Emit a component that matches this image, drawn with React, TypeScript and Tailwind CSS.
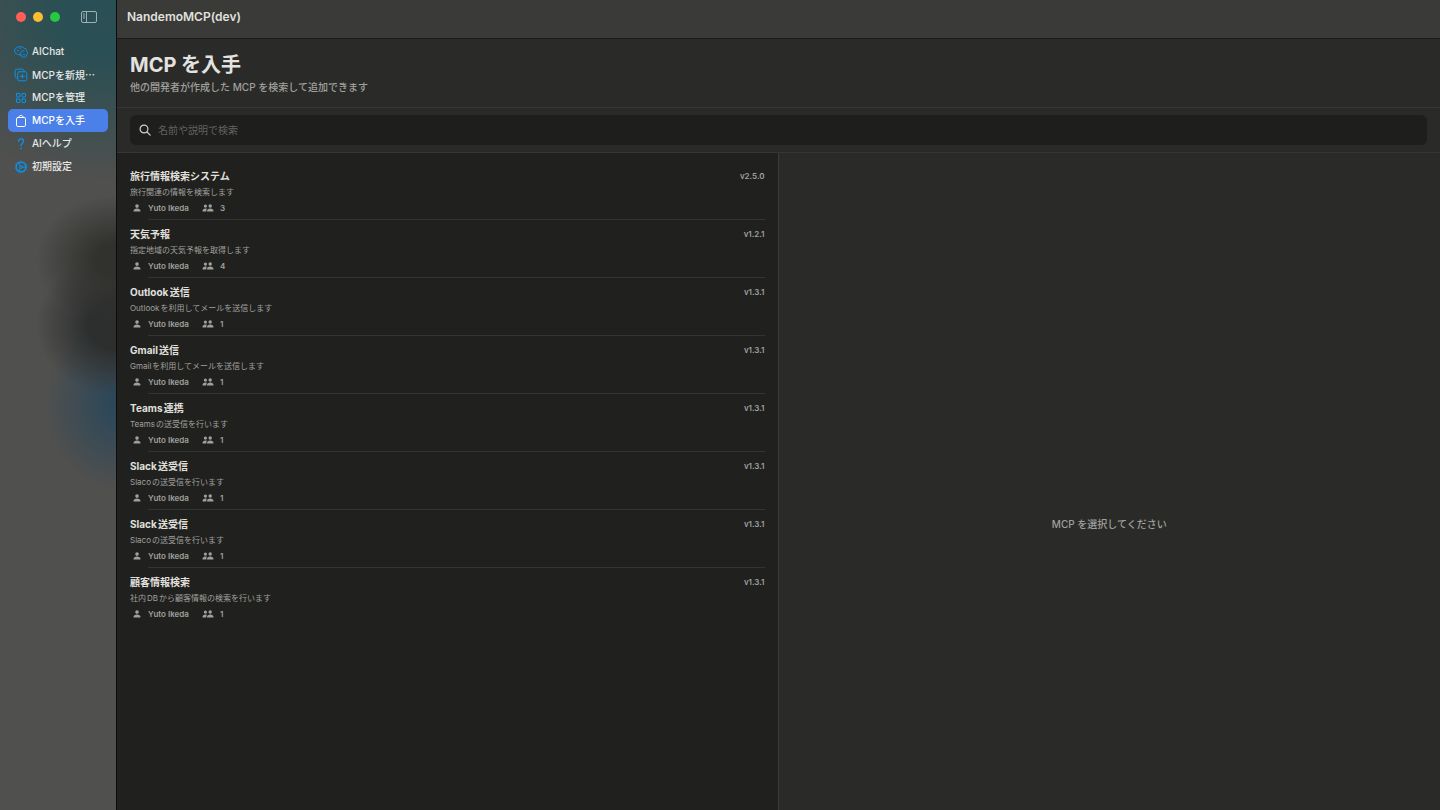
import { useState } from 'react';
import type { ReactNode } from 'react';

type McpItem = {
  id: number;
  name: string;
  description: string;
  author: string;
  users: number;
  version: string;
};

const mcpItems: McpItem[] = [
  { id: 1, name: '旅行情報検索システム', description: '旅行関連の情報を検索します', author: 'Yuto Ikeda', users: 3, version: 'v2.5.0' },
  { id: 2, name: '天気予報', description: '指定地域の天気予報を取得します', author: 'Yuto Ikeda', users: 4, version: 'v1.2.1' },
  { id: 3, name: 'Outlook送信', description: 'Outlookを利用してメールを送信します', author: 'Yuto Ikeda', users: 1, version: 'v1.3.1' },
  { id: 4, name: 'Gmail送信', description: 'Gmailを利用してメールを送信します', author: 'Yuto Ikeda', users: 1, version: 'v1.3.1' },
  { id: 5, name: 'Teams連携', description: 'Teamsの送受信を行います', author: 'Yuto Ikeda', users: 1, version: 'v1.3.1' },
  { id: 6, name: 'Slack送受信', description: 'Slacoの送受信を行います', author: 'Yuto Ikeda', users: 1, version: 'v1.3.1' },
  { id: 7, name: 'Slack送受信', description: 'Slacoの送受信を行います', author: 'Yuto Ikeda', users: 1, version: 'v1.3.1' },
  { id: 8, name: '顧客情報検索', description: '社内DBから顧客情報の検索を行います', author: 'Yuto Ikeda', users: 1, version: 'v1.3.1' },
];

const Icon = ({ children }: { children: ReactNode }) => (
  <svg viewBox="0 0 14 14" className="w-3.5 h-3.5 shrink-0" fill="none" stroke="currentColor" strokeWidth="1" strokeLinecap="round" strokeLinejoin="round" aria-hidden="true">
    {children}
  </svg>
);

const BrainIcon = () => (
  <Icon>
    <path d="M5.2 9.6C3.8 9.9 2.8 9.3 2.6 8.4C1.2 8.3.4 7.200.7 6C.2 4.600 1.100 3.300 2.400 3.200C3.100 1.600 5.200 1.200 6.400 2.100C7.800 1.300 9.600 1.900 9.900 3.300C11.600 3.200 12.700 4.400 12.400 5.900C13.800 6.800 13.900 8.900 12.700 9.700C12.900 11.600 11 12.800 9.500 11.900C8.200 12.600 6.800 11.600 7 10.100C6.400 10.100 5.700 9.900 5.200 9.600Z" />
    <path d="M3.100 5.600C3.800 4.700 4.900 5 5 6M6.400 2.200C5.800 3 6 3.900 6.800 4.200M7 10.100C5.700 9.300 6.200 7.400 7.600 7.300C7.700 5.800 9 5.300 9.900 6M9 9.800C9.400 9 10.500 9 10.700 10" />
  </Icon>
);

const NewIcon = () => (
  <Icon>
    <path d="M3.6 10H2.6C1.8 10 1.2 9.4 1.2 8.6V2.6C1.2 1.8 1.8 1.2 2.6 1.2H8.6C9.4 1.2 10 1.8 10 2.6V3.6" />
    <rect x="3.8" y="3.8" width="9" height="9" rx="1.4" />
    <path d="M8.3 6.2V10.4M6.2 8.3H10.4" />
  </Icon>
);

const GridIcon = () => (
  <Icon>
    <rect x="2.5" y="2.5" width="3.500" height="3.500" rx=".3" />
    <rect x="8" y="2.5" width="3.500" height="3.500" rx=".3" />
    <rect x="2.5" y="8" width="3.500" height="3.500" rx=".3" />
    <rect x="8" y="8" width="3.500" height="3.500" rx=".3" />
  </Icon>
);

const BagIcon = () => (
  <Icon>
    <rect x="2.500" y="3.500" width="9" height="9" rx="1.3" />
    <path d="M4.900 3.500C4.900 2.200 5.700 1.400 7 1.400C8.300 1.400 9.100 2.200 9.100 3.500" />
  </Icon>
);

const HelpIcon = () => (
  <Icon>
    <path d="M4.500 4.300C4.500 2.700 5.600 1.900 7 1.900C8.500 1.900 9.600 2.800 9.600 4.200C9.600 6.100 7 6.300 7 8.700" strokeWidth="1.300" />
    <circle cx="7" cy="11.500" r=".5" fill="currentColor" />
  </Icon>
);

const GearIcon = () => (
  <Icon>
    <circle cx="7" cy="7" r="4.800" strokeWidth="1.500" />
    <circle cx="7" cy="7" r="5.900" strokeWidth=".9" strokeDasharray="1 1.3" strokeLinecap="butt" />
    <circle cx="7" cy="7" r="1.300" />
    <path d="M8.400 7H12M6.300 5.800L4.500 2.700M6.300 8.200L4.500 11.300" />
  </Icon>
);

const PersonIcon = () => (
  <svg viewBox="0 0 8 8" className="w-2 h-2" fill="currentColor" aria-hidden="true">
    <circle cx="4" cy="2.1" r="1.8" />
    <path d="M.5 7C.5 5.5 2 4.6 4 4.6C6 4.6 7.500 5.500 7.500 7C7.500 7.400 7.200 7.600 6.800 7.600H1.200C.8 7.600.5 7.400.5 7Z" />
  </svg>
);

const PeopleIcon = () => (
  <svg viewBox="0 0 12 8" className="w-3 h-2" fill="currentColor" aria-hidden="true">
    <circle cx="3.400" cy="2.100" r="1.600" />
    <path d="M.5 7C.5 5.500 1.700 4.500 3.400 4.500C4 4.500 4.500 4.600 4.900 4.800C4.400 5.500 4.200 6.400 4.300 7.600H1.200C.8 7.600.5 7.400.5 7Z" />
    <circle cx="8.200" cy="2" r="1.700" />
    <path d="M5 7C5 5.500 6.400 4.500 8.200 4.500C10.100 4.500 11.500 5.500 11.500 7C11.500 7.400 11.300 7.600 10.900 7.600H5.600C5.200 7.600 5 7.400 5 7Z" />
  </svg>
);

const navItems = [
  { label: 'AIChat', icon: <BrainIcon /> },
  { label: 'MCPを新規', icon: <NewIcon />, truncated: true },
  { label: 'MCPを管理', icon: <GridIcon /> },
  { label: 'MCPを入手', icon: <BagIcon /> },
  { label: 'AIヘルプ', icon: <HelpIcon /> },
  { label: '初期設定', icon: <GearIcon /> },
];

function Sidebar() {
  const [active, setActive] = useState('MCPを入手');

  return (
    <aside className="w-[117px] shrink-0 border-r border-[#0c0c0c] bg-[#50504e] bg-[radial-gradient(80px_65px_at_116px_260px,#31312e_25%,transparent),radial-gradient(80px_70px_at_116px_325px,#2d2f2f_35%,transparent),radial-gradient(75px_85px_at_120px_405px,#2c4759_10%,transparent),radial-gradient(190px_165px_at_105px_15px,#2a4f54_25%,transparent)]">
      <div className="flex items-center h-[33px] pl-4">
        <div className="flex gap-[7px]">
          <button aria-label="閉じる" className="w-2.5 h-2.5 rounded-full bg-[#ff5f57]" />
          <button aria-label="しまう" className="w-2.5 h-2.5 rounded-full bg-[#febc2e]" />
          <button aria-label="拡大" className="w-2.5 h-2.5 rounded-full bg-[#28c840]" />
        </div>
        <button aria-label="サイドバーを切り替え" className="ml-5 text-[#9fb0b2]">
          <svg viewBox="0 0 18 14" className="w-[18px] h-3.5" fill="none" stroke="currentColor" strokeWidth="1">
            <rect x="1.500" y="1.500" width="15" height="11" rx="1.500" />
            <path d="M6.500 1.500V12.500M3 4H5M3 6H5M3 8H5" />
          </svg>
        </button>
      </div>
      <nav className="flex flex-col px-2 pt-[7px]">
        {navItems.map((item) => (
          <button
            key={item.label}
            onClick={() => setActive(item.label)}
            className={`flex items-center gap-1 h-[23px] pl-1.5 rounded-[5px] text-[10px] font-medium whitespace-nowrap ${
              active === item.label ? 'bg-[#4a80e8] text-white' : 'text-[#e8e8e7]'
            }`}
          >
            <span className={active === item.label ? 'text-white' : 'text-[#0d90ea]'}>{item.icon}</span>
            <span>
              {item.label}
              {item.truncated && <span className="font-['Noto_Sans_CJK_JP',sans-serif]">…</span>}
            </span>
          </button>
        ))}
      </nav>
    </aside>
  );
}

function McpRow({ item, last }: { item: McpItem; last: boolean }) {
  return (
    <li>
      <button className="block w-full h-[57px] pt-[3px] text-left [text-autospace:normal]">
        <span className="flex justify-between items-center h-4">
          <span className="text-[10px] font-bold text-[#e0e0de]">{item.name}</span>
          <span className="text-[8px] font-semibold text-[#a0a09e]">{item.version}</span>
        </span>
        <span className="block h-4 leading-4 text-[8px] text-[#a0a09e]">{item.description}</span>
        <span className="flex items-center h-4 pl-[3px] text-[8px] font-semibold text-[#a0a09e]">
          <PersonIcon />
          <span className="w-[43px] ml-[7px]">{item.author}</span>
          <span className="ml-[11px]"><PeopleIcon /></span>
          <span className="ml-1.5">{item.users}</span>
        </span>
      </button>
      <hr className={`ml-[18px] ${last ? 'border-transparent' : 'border-[#343432]'}`} />
    </li>
  );
}

export default function App() {
  const [query, setQuery] = useState('');
  const items = mcpItems.filter((item) => item.name.includes(query) || item.description.includes(query));

  return (
    <div className="flex min-h-screen bg-[#2a2a28] font-['Inter','Noto_Sans_CJK_JP',sans-serif]">
      <Sidebar />

      <main className="flex-1 min-w-0 flex flex-col">
        {/* Window title */}
        <div className="flex items-center h-[39px] pl-2.5 pb-1 bg-[#3a3a38] border-b border-[#1c1c1b]">
          <span className="text-xs font-semibold text-[#e0e0de]">NandemoMCP(dev)</span>
        </div>

        <header className="h-[69px] px-[13px] pt-3 border-b border-[#363634]">
          <h1 className="text-[20px] leading-7 font-bold text-[#e2e2e0]">MCP を入手</h1>
          <p className="text-[10px] leading-4 font-medium text-[#a0a09e]">他の開発者が作成した MCP を検索して追加できます</p>
        </header>

        <div className="px-[13px] py-[7px] border-b border-[#363634]">
          <label className="flex items-center gap-[7px] h-[30px] px-[9px] rounded-md bg-[#1e1e1d] text-[#d0d0ce]">
            <svg viewBox="0 0 12 12" className="w-3 h-3 shrink-0" fill="none" stroke="currentColor" strokeWidth="1.200" strokeLinecap="round" aria-hidden="true">
              <circle cx="5" cy="5" r="3.900" />
              <path d="M8 8L11.200 11.200" />
            </svg>
            <input
              type="text"
              value={query}
              onChange={(e) => setQuery(e.target.value)}
              aria-label="MCPを検索"
              placeholder="名前や説明で検索"
              className="flex-1 bg-transparent text-[10px] outline-none placeholder:text-[#636361]"
            />
          </label>
        </div>

        <div className="flex-1 grid grid-cols-2">
          <ul className="pl-[13px] pr-[13px] pt-[9px] bg-[#20201e] border-r border-[#3a3a38]">
            {items.map((item, index) => (
              <McpRow key={item.id} item={item} last={index === items.length - 1} />
            ))}
          </ul>
          <section className="flex items-center justify-center pt-[85px]">
            <p className="text-[10px] font-medium text-[#a0a09e]">MCP を選択してください</p>
          </section>
        </div>
      </main>
    </div>
  );
}
